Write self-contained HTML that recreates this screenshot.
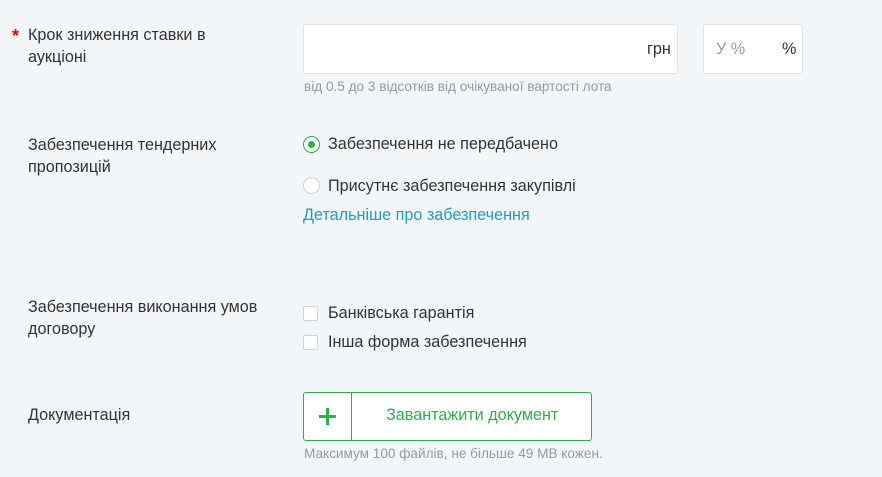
<!DOCTYPE html>
<html><head><meta charset="utf-8"><style>
body{margin:0;width:882px;height:477px;background:#f3f6f9;font-family:"Liberation Sans",sans-serif;color:#333;position:relative;overflow:hidden}
.a{position:absolute;white-space:nowrap}
.lbl{font-size:16.2px;line-height:22px}
.box{position:absolute;background:#fff;border:1px solid #dde2e7;border-radius:3px;box-sizing:border-box}
.hint{font-size:13.6px;color:#999}
.cb{position:absolute;width:15px;height:15px;border:1px solid #ccd2d8;border-radius:2px;background:#fff;box-sizing:border-box}
.rd{position:absolute;width:17px;height:17px;border:1px solid #ccd2d8;border-radius:50%;background:#fff;box-sizing:border-box}
.t{font-size:16.2px}
</style></head><body>
<div class="a" style="left:12px;top:26px;color:#e00;font-size:18px;font-weight:bold">*</div>
<div class="a lbl" style="left:28px;top:24px">Крок зниження ставки в<br>аукціоні</div>
<div class="box" style="left:303px;top:24px;width:375px;height:50px"></div>
<div class="a t" style="left:647px;top:40px">грн</div>
<div class="box" style="left:703px;top:24px;width:100px;height:50px"></div>
<div class="a t" style="left:716px;top:40px;color:#999">У %</div>
<div class="a t" style="left:782px;top:40px">%</div>
<div class="a hint" style="left:304px;top:79px">від 0.5 до 3 відсотків від очікуваної вартості лота</div>

<div class="a lbl" style="left:28px;top:134px">Забезпечення тендерних<br>пропозицій</div>
<div class="rd" style="left:303px;top:136px;border-color:#2bb04a"></div>
<div class="a" style="left:308px;top:141px;width:7px;height:7px;border-radius:50%;background:#2bb04a"></div>
<div class="a t" style="left:328px;top:135px">Забезпечення не передбачено</div>
<div class="rd" style="left:303px;top:177px"></div>
<div class="a t" style="left:328px;top:177px">Присутнє забезпечення закупівлі</div>
<div class="a t" style="left:303px;top:206px;color:#1e9bd0">Детальніше про забезпечення</div>

<div class="a lbl" style="left:28px;top:296px">Забезпечення виконання умов<br>договору</div>
<div class="cb" style="left:303px;top:306px"></div>
<div class="a t" style="left:328px;top:304px">Банківська гарантія</div>
<div class="cb" style="left:303px;top:335px"></div>
<div class="a t" style="left:328px;top:333px">Інша форма забезпечення</div>

<div class="a lbl" style="left:28px;top:404px">Документація</div>
<div class="a" style="left:303px;top:392px;width:289px;height:49px;border:1px solid #2bb04a;border-radius:3px;background:#fff;box-sizing:border-box"></div>
<div class="a" style="left:351px;top:393px;width:1px;height:47px;background:#2bb04a"></div>
<div class="a" style="left:319px;top:415px;width:17px;height:3px;background:#2bb04a"></div>
<div class="a" style="left:326px;top:408px;width:3px;height:17px;background:#2bb04a"></div>
<div class="a t" style="left:386px;top:406px;color:#2bb04a">Завантажити документ</div>
<div class="a hint" style="left:304px;top:446px">Максимум 100 файлів, не більше 49 MB кожен.</div>
</body></html>
